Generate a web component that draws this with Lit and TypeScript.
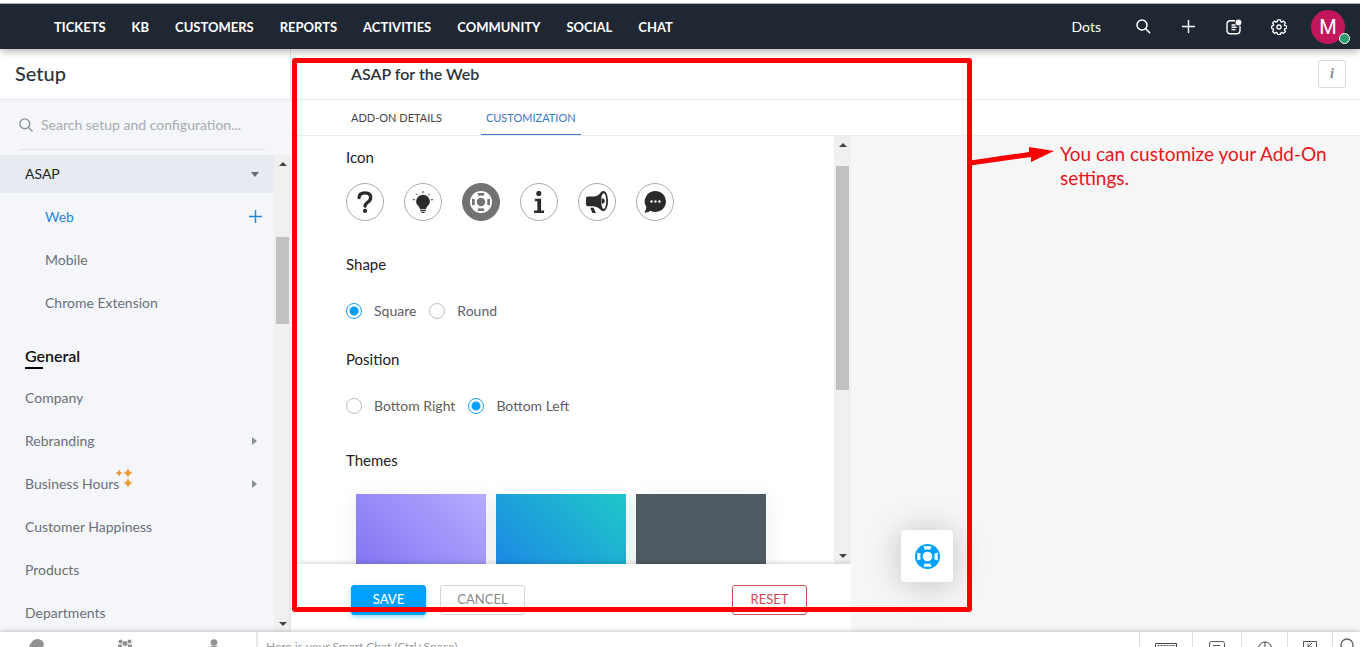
import { LitElement, html, css, svg } from "lit";
import { customElement, property, state } from "lit/decorators.js";
import { classMap } from "lit/directives/class-map.js";

const reset = css`
  * { box-sizing: border-box; }
  button { margin: 0; padding: 0; border: 0; background: none; font: inherit; color: inherit; cursor: pointer; }
  a { color: inherit; text-decoration: none; }
  svg { display: block; }
  h1, h2, h3, p, ul { margin: 0; padding: 0; font-weight: 400; }
  ul { list-style: none; }
`;

const buoy = (ring: string, gap: string) => svg`
  <circle cx="12" cy="12" r="12" fill=${ring}/>
  <circle cx="12" cy="12" r="4.6" fill=${gap}/>
  <g fill=${gap}>
    <path d="M8.1 2.2h7.8l-1.3 3.3q-2.6-1-5.2 0z"/>
    <path d="M8.1 21.8h7.8l-1.3-3.3q-2.6 1-5.2 0z"/>
    <path d="M2.2 8.1v7.8l3.3-1.3q-1-2.6 0-5.2z"/>
    <path d="M21.8 8.1v7.8l-3.3-1.3q1-2.6 0-5.2z"/>
  </g>`;

@customElement("scroll-track")
export class ScrollTrack extends LitElement {
  @property({ type: Number }) before = 0;
  @property({ type: Number }) thumb = 0;
  static styles = [reset, css`
    :host { display: flex; flex-direction: column; width: 17px; background: #f0f0f0; flex: none; }
    .arrow { height: 17px; display: grid; place-items: center; flex: none; }
    .rail { flex: 1; min-height: 0; padding: 0 2px; }
    .thumb { width: 13px; background: #c1c1c1; }
  `];
  render() {
    return html`
      <div class="arrow"><svg width="8" height="4" viewBox="0 0 8 4"><path d="M0 4 4 0l4 4z" fill="#444"/></svg></div>
      <div class="rail">
        <div style="height:${this.before}%"></div>
        <div class="thumb" style="height:${this.thumb}%"></div>
      </div>
      <div class="arrow"><svg width="8" height="4" viewBox="0 0 8 4"><path d="M0 0h8L4 4z" fill="#444"/></svg></div>`;
  }
}

@customElement("top-nav")
export class TopNav extends LitElement {
  static styles = [reset, css`
    :host { display: block; position: relative; z-index: 3; border-top: 3px solid #fff; box-shadow: 0 2px 8px rgba(0,0,0,.32); }
    .bar { display: flex; align-items: center; height: 46px; padding: 0 15px 0 54px; background: #1f2733; border-top: 1px solid #a9acb0; color: #fff; }
    .links { display: flex; gap: 26px; flex: 1; font-size: 13px; font-weight: 700; line-height: 16px; }
    .tools { display: flex; align-items: center; }
    .dots { font-size: 14px; line-height: 18px; margin-right: 30px; }
    .tool { width: 25px; height: 25px; display: grid; place-items: center; margin-right: 20px; }
    .avatar { position: relative; width: 34px; height: 34px; border-radius: 50%; background: #c2185b; font: 20px/34px Roboto, sans-serif; text-align: center; }
    .status { position: absolute; right: -5px; bottom: 0; width: 11px; height: 11px; border-radius: 50%; border: 1px solid #fff; background: #2c9a6b; }
  `];
  links = ["TICKETS", "KB", "CUSTOMERS", "REPORTS", "ACTIVITIES", "COMMUNITY", "SOCIAL", "CHAT"];
  render() {
    return html`<header class="bar">
      <nav class="links">${this.links.map((l) => html`<a href="#">${l}</a>`)}</nav>
      <div class="tools">
        <button class="dots">Dots</button>
        <button class="tool" aria-label="Search"><svg width="15" height="15" viewBox="0 0 15 15" fill="none" stroke="#fff" stroke-width="1.5"><circle cx="6" cy="6" r="5"/><path d="M9.7 9.7l4.4 4.4"/></svg></button>
        <button class="tool" aria-label="Add"><svg width="13" height="13" viewBox="0 0 13 13" stroke="#fff" stroke-width="1.4"><path d="M6.5 0v13M0 6.5h13"/></svg></button>
        <button class="tool" aria-label="Updates"><svg width="16" height="16" viewBox="0 0 16 16" fill="none" stroke="#fff" stroke-width="1.4"><path d="M9 1.700H4.500Q1 1.700 1 5.200v6Q1 14.700 4.500 14.700h6Q14 14.700 14 11.200V7M5.500 6h4M5.500 8.300h5M5.500 10.600h4"/><circle cx="12.500" cy="3.500" r="2.900" fill="#fff" stroke="none"/></svg></button>
        <button class="tool" aria-label="Settings"><svg width="16" height="16" viewBox="0 0 16 16" fill="none" stroke="#fff" stroke-width="1.3" stroke-linejoin="round"><path d="M6.600 .8h2.800l.4 1.900 1 .4 1.700-1 1.900 1.900-1 1.700.4 1 1.900.4v2.200l-1.900.5-.4 1 1 1.700-1.900 1.900-1.700-1-1 .4-.4 1.600H6.600l-.4-1.600-1-.4-1.700 1-1.900-1.900 1-1.700-.4-1L.6 9.300V7.100l1.600-.4.4-1-1-1.700 1.900-1.900 1.700 1 1-.4z"/><circle cx="8" cy="8.100" r="2.100"/></svg></button>
        <button class="avatar" aria-label="Profile">M<span class="status"></span></button>
      </div></header>`;
  }
}

interface Item { label: string; arrow?: boolean; spark?: boolean }

@customElement("setup-sidebar")
export class SetupSidebar extends LitElement {
  static styles = [reset, css`
    :host { display: flex; flex-direction: column; width: 291px; flex: none; min-height: 0; background: #f4f6fa; color: #6b6f76; font-size: 14px; }
    .title { height: 51px; padding: 0 15px; background: #fff; border-bottom: 1px solid #e6e7ea; border-right: 1px solid #e3e3e6; color: #2f3338; font-size: 20px; line-height: 48px; font-weight: 500; }
    .search { display: flex; align-items: center; gap: 8px; height: 50px; margin: 0 25px 5px 19px; border-bottom: 1px solid #e2e4e9; }
    .search input { flex: 1; min-width: 0; border: 0; outline: 0; background: none; font: inherit; padding: 0; }
    .search input::placeholder { color: #a8abb1; opacity: 1; }
    .scroller { display: flex; flex: 1; min-height: 0; }
    .list { flex: 1; min-width: 0; overflow: hidden; }
    .row { display: flex; align-items: center; height: 43px; padding: 0 17px 0 25px; line-height: 18px; }
    .row a { flex: 1; }
    .top { height: 38px; margin-bottom: 2px; padding-right: 15px; background: #e7eaf1; color: #222; }
    .sub { padding: 0 12px 0 45px; }
    .active { color: #1f88d9; }
    .group { margin: 22px 0 0 25px; height: 30px; color: #111; font-size: 16px; line-height: 20px; font-weight: 600; }
    .group::after { content: ""; display: block; width: 18px; height: 2px; margin-top: 1px; background: #000; }
    .spark { position: absolute; display: inline; margin: -8px 0 0 -4px; }
  `];
  items: Item[] = [{ label: "Company" }, { label: "Rebranding", arrow: true }, { label: "Business Hours", arrow: true, spark: true }, { label: "Customer Happiness" }, { label: "Products" }, { label: "Departments" }];
  star(x: number, y: number, r: number) {
    return svg`<path fill="#ee9a2e" d="M${x} ${y - r}Q${x + 0.8} ${y - 0.8} ${x + r} ${y}Q${x + 0.8} ${y + 0.8} ${x} ${y + r}Q${x - 0.8} ${y + 0.8} ${x - r} ${y}Q${x - 0.8} ${y - 0.8} ${x} ${y - r}z"/>`;
  }
  render() {
    return html`
      <h1 class="title">Setup</h1>
      <label class="search">
        <svg width="14" height="14" viewBox="0 0 14 14" fill="none" stroke="#8d9197" stroke-width="1.4"><circle cx="5.800" cy="5.800" r="4.900"/><path d="M9.300 9.300l4.200 4.200"/></svg>
        <input type="text" aria-label="Search setup and configuration" placeholder="Search setup and configuration...">
      </label>
      <div class="scroller">
        <nav class="list">
          <div class="row top"><a href="#">ASAP</a><svg width="8" height="5" viewBox="0 0 8 5"><path d="M0 0h8L4 5z" fill="#666b73"/></svg></div>
          <div class="row sub active"><a href="#">Web</a><button aria-label="Add web add-on"><svg width="13" height="13" viewBox="0 0 13 13" stroke="#1f88d9" stroke-width="1.400"><path d="M6.500 0v13M0 6.500h13"/></svg></button></div>
          <div class="row sub"><a href="#">Mobile</a></div>
          <div class="row sub"><a href="#">Chrome Extension</a></div>
          <h2 class="group">General</h2>
          ${this.items.map((i) => html`<div class="row"><a href="#">${i.label}${i.spark ? html`<svg class="spark" width="18" height="22" viewBox="0 0 18 22">${this.star(4, 6, 3.5)}${this.star(13, 6, 5)}${this.star(13, 16, 5)}</svg>` : ""}</a>
            ${i.arrow ? html`<svg width="5" height="8" viewBox="0 0 5 8"><path d="M0 0l5 4-5 4z" fill="#8b8f96"/></svg>` : ""}</div>`)}
        </nav>
        <scroll-track .before=${14.7} .thumb=${19.7}></scroll-track>
      </div>`;
  }
}

const glyphs: { name: string; art: unknown }[] = [
  { name: "Question", art: svg`<path d="M5.500 7.200Q5.800 2 12 2t6.200 5.200q0 3-3 5-3 1.900-3.100 4.300" fill="none" stroke="#2b2b2b" stroke-width="3.600" stroke-linecap="round"/><circle cx="12" cy="21.700" r="2.300" fill="#2b2b2b"/>` },
  { name: "Idea", art: svg`<path d="M12 4a7.500 7.500 0 0 0-7.500 7.500c0 3.800 3.800 5 4.300 8.500h6.400c.5-3.500 4.300-4.700 4.300-8.500A7.500 7.500 0 0 0 12 4zM9 20.800h6v1.200H9zM9.800 22.800h4.400l-1.200 1.400h-2z" fill="#2b2b2b"/><path d="M12 0v2.500M4.500 3l1.700 1.700M19.500 3l-1.700 1.700M1 9.500h2.300M20.700 9.500H23" stroke="#2b2b2b" stroke-width="1"/>` },
  { name: "Help", art: buoy("#fff", "#727272") },
  { name: "Info", art: svg`<circle cx="11.800" cy="2.700" r="2.800" fill="#2b2b2b"/><path d="M7.500 8.500h6.800v12.800h3.200V24h-11v-2.700h3.700v-10H7.500z" fill="#2b2b2b"/>` },
  { name: "Announcement", art: svg`<path d="M0 8q0-2 2-2h6q5 0 8.500-5Q18 0 19 0c3 0 5 5 5 11s-2 11-5 11q-1 0-2.500-1Q13 17 8 16.500H2q-2 0-2-2zM4.500 18.200h3.800l2.500 5.800H7z" fill="#2b2b2b"/><ellipse cx="19.300" cy="11" rx="2.800" ry="8.500" fill="#fff"/><path d="M17 8q3.500 0 3.500 3T17 14z" fill="#2b2b2b"/>` },
  { name: "Chat", art: svg`<path d="M12.500 0A11.500 11.500 0 0 1 24 11.500a11.500 11.500 0 0 1-17 10Q4 24 .2 23.500 2.600 21 2.600 17.700A11.500 11.500 0 0 1 12.500 0z" fill="#2b2b2b"/><g fill="#fff"><circle cx="8.200" cy="11.500" r="1.300"/><circle cx="12.500" cy="11.500" r="1.300"/><circle cx="16.800" cy="11.500" r="1.300"/></g>` },
];

@customElement("asap-settings")
export class AsapSettings extends LitElement {
  @state() icon = 2;
  static styles = [reset, css`
    :host { display: flex; flex-direction: column; flex: 1; min-width: 0; background: #fff; color: #222; }
    .head { display: flex; align-items: center; justify-content: space-between; height: 51px; padding: 0 14px 0 60px; border-bottom: 1px solid #e6e7ea; }
    .head h2 { font-size: 16px; line-height: 20px; font-weight: 600; color: #2f3338; }
    .info { width: 28px; height: 28px; border: 1px solid #d9d9d9; border-radius: 2px; font: italic 700 14px/26px "Liberation Serif", serif; color: #85888d; }
    .tabs { display: flex; gap: 34px; height: 36px; padding-left: 55px; border-bottom: 1px dotted #d9d9d9; font-size: 11px; color: #444; }
    .tab { height: 35px; padding: 0 5px; line-height: 35px; border-bottom: 1px solid transparent; }
    .on { color: #3b78c8; border-bottom-color: #3b78c8; }
    .body { display: flex; flex: 1; min-height: 0; }
    .panel { display: flex; flex-direction: column; width: 560px; flex: none; }
    .scroller { display: flex; flex: 1; min-height: 0; }
    .form { flex: 1; overflow: hidden; padding: 11px 0 0 55px; }
    .form h3 { font-size: 15px; line-height: 20px; }
    .icons { display: flex; gap: 20px; margin: 16px 0 33px; }
    .icon { width: 38px; height: 38px; border: 1px solid #adadad; border-radius: 50%; display: grid; place-items: center; }
    .picked { background: #727272; border-color: #727272; }
    .options { display: flex; gap: 13px; margin: 27px 0 28px; height: 20px; font-size: 14px; line-height: 20px; color: #5e5e5e; }
    .position { margin-bottom: 34px; }
    .options label { display: flex; align-items: center; gap: 12px; }
    .options input { appearance: none; width: 16px; height: 16px; margin: 0; border: 1px solid #bdbdbd; border-radius: 50%; }
    .options input:checked { border-color: #1a9bf0; background: radial-gradient(circle, #00a0ff 4px, #fff 5px); }
    .themes { display: flex; gap: 10px; margin: 24px 0 0 10px; }
    .theme { width: 130px; height: 80px; box-shadow: 0 4px 20px rgba(0,0,0,.08); }
    .violet { background: linear-gradient(45deg, #8072f2, #b5adff); }
    .teal { background: linear-gradient(45deg, #1c86e6, #1fc8c8); }
    .slate { background: #4f5b63; }
    .actions { position: relative; display: flex; align-items: flex-start; gap: 14px; height: 68px; padding: 21px 44px 0 60px; box-shadow: 0 -2px 4px rgba(0,0,0,.12); font-size: 13px; line-height: 26px; }
    .button { height: 30px; padding-bottom: 2px; border: 1px solid; border-radius: 3px; }
    .save { width: 75px; border-color: #00a0ff; background: #00a0ff; color: #fff; font-weight: 500; box-shadow: 0 2px 5px rgba(0,160,255,.4); }
    .cancel { width: 85px; border-color: #d5d5d5; color: #888; }
    .reset { width: 75px; margin-left: auto; color: #d04a4f; }
    .preview { position: relative; flex: 1; background: #f6f6f6; }
    .launcher { position: absolute; left: 50px; bottom: 50px; width: 52px; height: 52px; border-radius: 4px; background: #fff; display: grid; place-items: center; box-shadow: 0 2px 34px rgba(0,0,0,.22); }
  `];
  choice(group: string, label: string, checked = false) {
    return html`<label><input type="radio" name=${group} ?checked=${checked}>${label}</label>`;
  }
  render() {
    return html`
      <div class="head"><h2>ASAP for the Web</h2><button class="info" aria-label="Information">i</button></div>
      <nav class="tabs"><a class="tab" href="#">ADD-ON DETAILS</a><a class="tab on" href="#">CUSTOMIZATION</a></nav>
      <div class="body">
        <section class="panel">
          <div class="scroller">
            <div class="form">
              <h3>Icon</h3>
              <div class="icons">${glyphs.map((g, i) => html`<button class=${classMap({ icon: true, picked: i === this.icon })} aria-label=${g.name} aria-pressed=${i === this.icon} @click=${() => (this.icon = i)}><svg width="22" height="22" viewBox="0 0 24 24">${g.art}</svg></button>`)}</div>
              <h3>Shape</h3>
              <div class="options">${this.choice("shape", "Square", true)}${this.choice("shape", "Round")}</div>
              <h3>Position</h3>
              <div class="options position">${this.choice("position", "Bottom Right")}${this.choice("position", "Bottom Left", true)}</div>
              <h3>Themes</h3>
              <div class="themes">${["violet", "teal", "slate"].map((t) => html`<button class="theme ${t}" aria-label=${t}></button>`)}</div>
            </div>
            <scroll-track .before=${3.3} .thumb=${56.8}></scroll-track>
          </div>
          <div class="actions"><button class="button save">SAVE</button><button class="button cancel">CANCEL</button><button class="button reset">RESET</button></div>
        </section>
        <section class="preview"><button class="launcher" aria-label="Open help"><svg width="25" height="25" viewBox="0 0 24 24">${buoy("#00a0ff", "#fff")}</svg></button></section>
      </div>`;
  }
}

@customElement("chat-bar")
export class ChatBar extends LitElement {
  static styles = [reset, css`
    :host { display: flex; height: 15px; overflow: hidden; align-items: flex-start; background: #fff; }
    .people { display: flex; gap: 73px; flex: none; width: 258px; height: 15px; padding: 7px 0 0 28px; border-right: 2px solid #e6e6e6; }
    .people button { width: 16px; flex: none; }
    .people button, .tool { display: flex; justify-content: center; align-items: flex-start; }
    .entry { flex: 1; min-width: 0; height: 28px; border: 0; outline: 0; padding: 0 8px; font: inherit; font-size: 12px; }
    .entry::placeholder { color: #9a9a9a; opacity: 1; }
    .tools { display: grid; grid-template-columns: 53px 49px 46px 45px 28px; flex: none; }
    .tool { height: 15px; padding-top: 9px; border-left: 1px solid #dcdcdc; }
    .find { padding-top: 6px; }
  `];
  render() {
    return html`
      <div class="people">
        <button aria-label="Chats"><svg width="15" height="12" viewBox="0 0 15 12" fill="#909090"><ellipse cx="8.500" cy="5.500" rx="6.300" ry="5.500"/><path d="M3 3Q-1 6 1 9l-1 3h5Q1 8 3 3z"/></svg></button>
        <button aria-label="Groups"><svg width="14" height="12" viewBox="0 0 14 12" fill="#909090"><circle cx="2.500" cy="2.500" r="2"/><circle cx="11.500" cy="2.500" r="2"/><circle cx="7" cy="4.500" r="2.500"/><path d="M0 5.500h4v3H0zM10 5.500h4v3h-4zM3 8h8v4H3z"/></svg></button>
        <button aria-label="Contacts"><svg width="12" height="12" viewBox="0 0 12 12" fill="#909090"><circle cx="6" cy="3.500" r="3.300"/><path d="M.5 12V9.500Q.5 7 6 7t5.500 2.500V12z"/></svg></button>
      </div>
      <input class="entry" type="text" aria-label="Smart Chat" placeholder="Here is your Smart Chat (Ctrl+Space)">
      <div class="tools">
        <button class="tool" aria-label="Keyboard"><svg width="22" height="12" viewBox="0 0 22 12" fill="none" stroke="#444"><path d="M.5 12V2.500h21V12"/><path d="M2.500 4.500h18M2.500 7.500h18" stroke-dasharray="2 1"/></svg></button>
        <button class="tool" aria-label="Notes"><svg width="16" height="12" viewBox="0 0 16 12" fill="none" stroke="#555"><path d="M.5 12V3q0-2.500 2-2.500h11q2 0 2 2.500v9M4 4.500h7"/></svg></button>
        <button class="tool" aria-label="Recent"><svg width="14" height="14" viewBox="0 0 14 14" fill="none" stroke="#444"><circle cx="7" cy="7.500" r="6.500"/><path d="M7 1v8"/></svg></button>
        <button class="tool" aria-label="Expand"><svg width="14" height="12" viewBox="0 0 14 12" fill="none" stroke="#555"><path d="M.5 12V.5h13V12M9 2L5 6M5 2.500V6h4"/></svg></button>
        <button class="tool find" aria-label="Find"><svg width="14" height="14" viewBox="0 0 14 14" fill="none" stroke="#666" stroke-width="1.400"><circle cx="7" cy="7" r="6"/></svg></button>
      </div>`;
  }
}

@customElement("app-root")
export class AppRoot extends LitElement {
  static styles = [reset, css`
    :host { display: flex; flex-direction: column; position: relative; height: 100vh; overflow: hidden; background: #fff; font-family: Lato, "Open Sans", sans-serif; }
    .main { display: flex; flex: 1; min-height: 0; }
    .edge { position: relative; z-index: 2; box-shadow: 0 0 5px rgba(0,0,0,.3); }
    .frame { position: absolute; z-index: 5; left: 292px; top: 58px; width: 680px; bottom: 35px; border: 5px solid #f90000; border-radius: 3px; pointer-events: none; }
    .arrow { position: absolute; z-index: 5; left: 966px; top: 144px; pointer-events: none; }
    .note { position: absolute; z-index: 5; left: 1060px; top: 142px; width: 290px; color: #e8141c; font-size: 19px; line-height: 24px; }
  `];
  render() {
    return html`
      <top-nav></top-nav>
      <div class="main"><setup-sidebar></setup-sidebar><asap-settings></asap-settings></div>
      <chat-bar class="edge"></chat-bar>
      <div class="frame"></div>
      <svg class="arrow" width="90" height="24" viewBox="0 0 90 24"><path d="M1 17L63 8V3l25 4-23 11v-5L1 22z" fill="#f90000"/></svg>
      <p class="note">You can customize your Add-On settings.</p>`;
  }
}
